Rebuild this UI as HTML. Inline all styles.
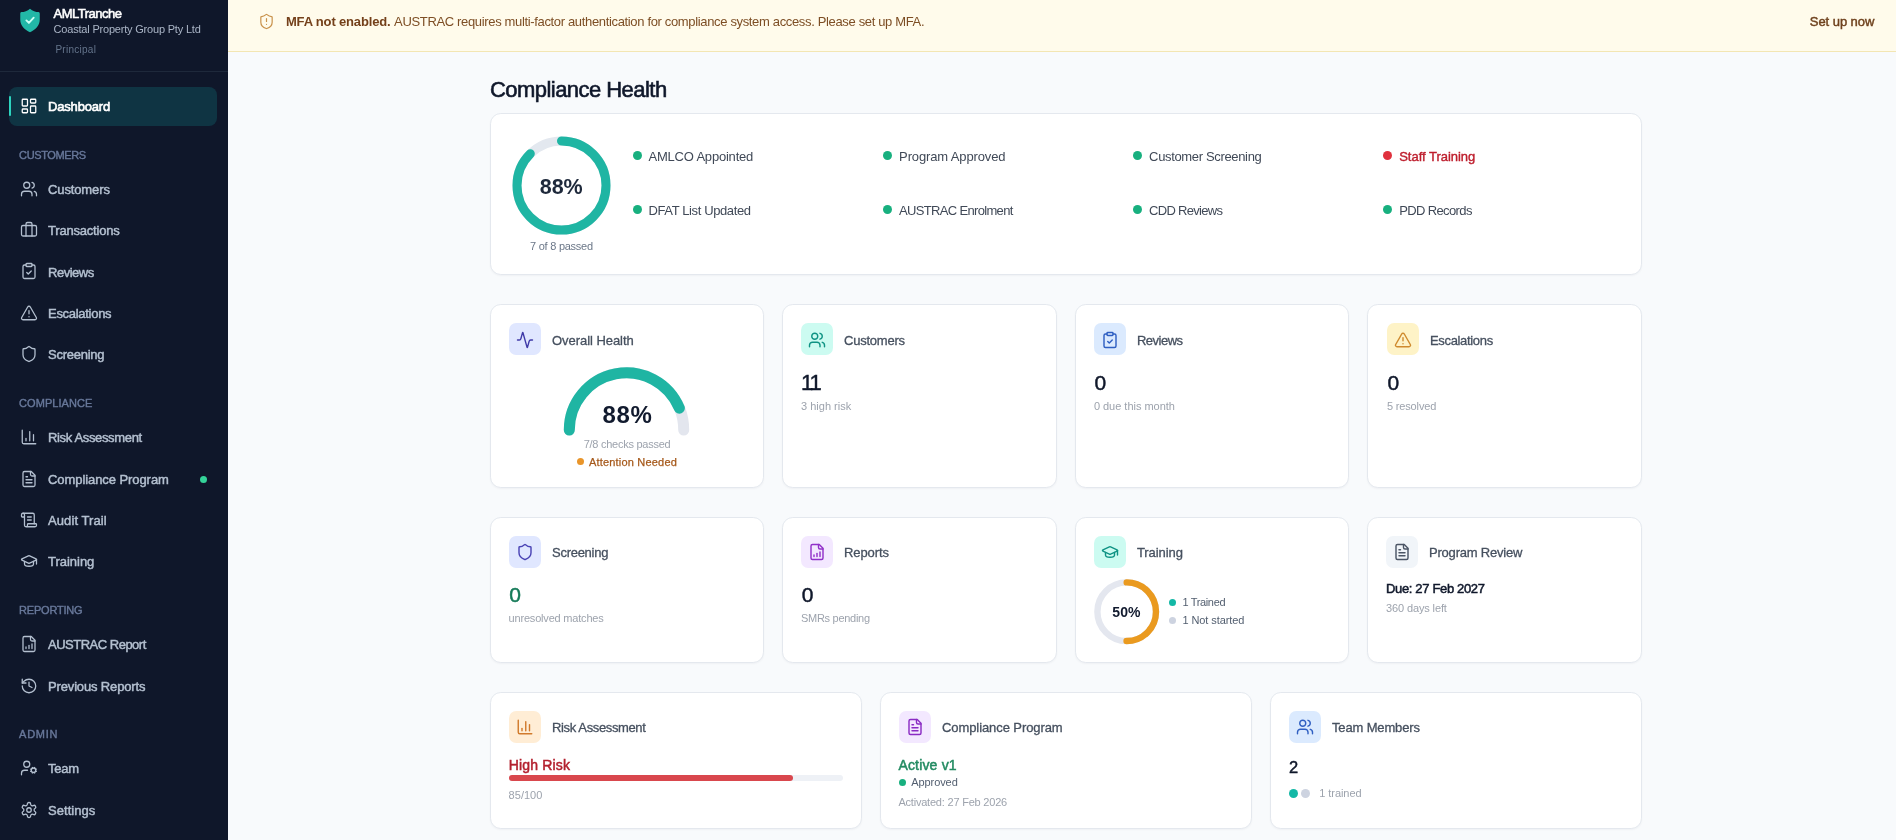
<!DOCTYPE html>
<html lang="en">
<head>
<meta charset="utf-8">
<title>AMLTranche – Dashboard</title>
<style>
*{box-sizing:border-box;margin:0;padding:0}
html,body{width:1896px;height:840px;overflow:hidden}
body{font-family:"Liberation Sans",sans-serif;background:#f8fafc;color:#0f172a;position:relative}
svg{display:block}
#root{position:absolute;left:0;top:0;width:1896px;height:840px;will-change:transform}
.t{position:absolute;white-space:nowrap}
.t i{font-style:normal}
#side{position:absolute;left:0;top:0;width:228px;height:840px;background:#0f172a}
#brand{position:absolute;left:0;top:0;width:228px;height:72px;border-bottom:1px solid #1e293b}
.nav{position:absolute;left:9px;width:208px;height:39.5px;border-radius:8px}
.nav svg,.ni{position:absolute;width:18px;height:18px;stroke:#b4c0d0;fill:none;stroke-width:1.7;stroke-linecap:round;stroke-linejoin:round}
.nav.act{background:#0f3443}
.nav.act:before{content:"";position:absolute;left:0;top:9px;width:2px;height:20px;background:#2dd4bf;border-radius:2px}
#ban{position:absolute;left:228px;top:0;width:1668px;height:52px;background:#fffbeb;border-bottom:1px solid #f3e6b3}
.card{position:absolute;background:#fff;border:1px solid #e4e8ee;border-radius:10.800px;box-shadow:0 1px 2px rgba(15,23,42,.04)}
.ibox{position:absolute;width:32px;height:32px;border-radius:7.200px}
.ibox svg{position:absolute;left:7px;top:7px;width:18px;height:18px;fill:none;stroke-width:1.9;stroke-linecap:round;stroke-linejoin:round}
.dot{position:absolute;border-radius:50%}
.abs{position:absolute}
</style>
</head>
<body>
<div id="root">

<div id="side">
<div id="brand"><svg class="abs" style="left:17.500px;top:7px" width="24" height="27" viewBox="0 0 24 27"><path d="M12 1.700C9.500 3.900 6.200 5 3.400 5.100Q2.250 5.200 2.250 6.400V12.500C2.250 18.500 6.500 22.800 12 25.300C17.500 22.800 21.750 18.500 21.750 12.500V6.400Q21.750 5.200 20.600 5.100C17.800 5 14.500 3.900 12 1.700Z" fill="#22b8a7"/><path d="M8.400 13.400l2.500 2.500 4.800-5.200" fill="none" stroke="#c9fff5" stroke-width="1.900" stroke-linecap="round" stroke-linejoin="round"/></svg></div>
<div class="t" style="font-size:13px;line-height:20px;top:4.10px;color:#ffffff;-webkit-text-stroke:0.55px #ffffff;left:53.60px;letter-spacing:-0.518px">AMLTranche</div>
<div class="t" style="font-size:11px;line-height:16px;top:21.49px;color:#aab5c6;left:53.60px;letter-spacing:-0.195px">Coastal Property Group Pty Ltd</div>
<div class="t" style="font-size:10px;line-height:15px;top:41.53px;color:#64748b;left:55.40px;letter-spacing:0.271px">Principal</div>
<div class="nav act" style="top:87px;height:38.5px;"><svg class="" style="left:11px;top:10px;stroke:#fff" viewBox="0 0 24 24"><rect x="3" y="3" width="7" height="9" rx="1"/><rect x="14" y="3" width="7" height="5" rx="1"/><rect x="14" y="12" width="7" height="9" rx="1"/><rect x="3" y="16" width="7" height="5" rx="1"/></svg></div>
<div class="t" style="font-size:13px;line-height:20px;top:97.45px;color:#ffffff;-webkit-text-stroke:0.6px #ffffff;left:48.00px;letter-spacing:-0.179px">Dashboard</div>
<div class="nav" style="top:169.8px;"><svg class="" style="left:11px;top:10px;" viewBox="0 0 24 24"><path d="M16 21v-2a4 4 0 0 0-4-4H6a4 4 0 0 0-4 4v2"/><circle cx="9" cy="7" r="4"/><path d="M22 21v-2a4 4 0 0 0-3-3.870"/><path d="M16 3.130a4 4 0 0 1 0 7.750"/></svg></div>
<div class="t" style="font-size:13px;line-height:20px;top:180.25px;color:#b4c0d0;-webkit-text-stroke:0.45px #b4c0d0;left:48.00px;letter-spacing:-0.118px">Customers</div>
<div class="nav" style="top:211.1px;"><svg class="" style="left:11px;top:10px;" viewBox="0 0 24 24"><rect x="2" y="6" width="20" height="14" rx="2"/><path d="M8 20V4a2 2 0 0 1 2-2h4a2 2 0 0 1 2 2v16"/></svg></div>
<div class="t" style="font-size:13px;line-height:20px;top:220.75px;color:#b4c0d0;-webkit-text-stroke:0.45px #b4c0d0;left:48.00px;letter-spacing:-0.195px">Transactions</div>
<div class="nav" style="top:252.4px;"><svg class="" style="left:11px;top:10px;" viewBox="0 0 24 24"><rect x="8" y="2" width="8" height="4" rx="1"/><path d="M16 4h2a2 2 0 0 1 2 2v14a2 2 0 0 1-2 2H6a2 2 0 0 1-2-2V6a2 2 0 0 1 2-2h2"/><path d="m9 14 2 2 4-4"/></svg></div>
<div class="t" style="font-size:13px;line-height:20px;top:262.85px;color:#b4c0d0;-webkit-text-stroke:0.45px #b4c0d0;left:48.00px;letter-spacing:-0.475px">Reviews</div>
<div class="nav" style="top:293.6px;"><svg class="" style="left:11px;top:10px;" viewBox="0 0 24 24"><path d="m21.730 18-8-14a2 2 0 0 0-3.480 0l-8 14A2 2 0 0 0 4 21h16a2 2 0 0 0 1.730-3"/><path d="M12 9v4"/><path d="M12 17h.01"/></svg></div>
<div class="t" style="font-size:13px;line-height:20px;top:304.05px;color:#b4c0d0;-webkit-text-stroke:0.45px #b4c0d0;left:48.00px;letter-spacing:-0.289px">Escalations</div>
<div class="nav" style="top:334.8px;"><svg class="" style="left:11px;top:10px;" viewBox="0 0 24 24"><path d="M20 13c0 5-3.500 7.500-7.660 8.950a1 1 0 0 1-.67-.01C7.500 20.500 4 18 4 13V6a1 1 0 0 1 1-1c2 0 4.500-1.200 6.240-2.720a1.170 1.170 0 0 1 1.520 0C14.510 3.810 17 5 19 5a1 1 0 0 1 1 1z"/></svg></div>
<div class="t" style="font-size:13px;line-height:20px;top:345.25px;color:#b4c0d0;-webkit-text-stroke:0.45px #b4c0d0;left:48.00px;letter-spacing:-0.250px">Screening</div>
<div class="nav" style="top:417.5px;"><svg class="" style="left:11px;top:10px;" viewBox="0 0 24 24"><path d="M3 3v16a2 2 0 0 0 2 2h16"/><path d="M18 17V9"/><path d="M13 17V5"/><path d="M8 17v-3"/></svg></div>
<div class="t" style="font-size:13px;line-height:20px;top:427.95px;color:#b4c0d0;-webkit-text-stroke:0.45px #b4c0d0;left:48.00px;letter-spacing:-0.346px">Risk Assessment</div>
<div class="nav" style="top:459px;"><svg class="" style="left:11px;top:11px;" viewBox="0 0 24 24"><path d="M15 2H6a2 2 0 0 0-2 2v16a2 2 0 0 0 2 2h12a2 2 0 0 0 2-2V7Z"/><path d="M14 2v4a2 2 0 0 0 2 2h4"/><path d="M10 9H8"/><path d="M16 13H8"/><path d="M16 17H8"/></svg></div>
<div class="t" style="font-size:13px;line-height:20px;top:470.45px;color:#b4c0d0;-webkit-text-stroke:0.45px #b4c0d0;left:48.00px;letter-spacing:-0.073px">Compliance Program</div>
<div class="nav" style="top:500.5px;"><svg class="" style="left:11px;top:10px;" viewBox="0 0 24 24"><path d="M15 12h-5"/><path d="M15 8h-5"/><path d="M19 17V5a2 2 0 0 0-2-2H4"/><path d="M8 21h12a2 2 0 0 0 2-2v-1a1 1 0 0 0-1-1H11a1 1 0 0 0-1 1v1a2 2 0 1 1-4 0V5a2 2 0 1 0-4 0v2a1 1 0 0 0 1 1h3"/></svg></div>
<div class="t" style="font-size:13px;line-height:20px;top:510.95px;color:#b4c0d0;-webkit-text-stroke:0.45px #b4c0d0;left:48.00px;letter-spacing:0.090px">Audit Trail</div>
<div class="nav" style="top:542px;"><svg class="" style="left:11px;top:10px;" viewBox="0 0 24 24"><path d="M21.420 10.922a1 1 0 0 0-.019-1.838L12.830 5.180a2 2 0 0 0-1.660 0L2.600 9.080a1 1 0 0 0 0 1.832l8.570 3.908a2 2 0 0 0 1.660 0z"/><path d="M22 10v6"/><path d="M6 12.500V16a6 3 0 0 0 12 0v-3.500"/></svg></div>
<div class="t" style="font-size:13px;line-height:20px;top:552.45px;color:#b4c0d0;-webkit-text-stroke:0.45px #b4c0d0;left:48.00px;letter-spacing:-0.023px">Training</div>
<div class="nav" style="top:624.5px;"><svg class="" style="left:11px;top:10px;" viewBox="0 0 24 24"><path d="M15 2H6a2 2 0 0 0-2 2v16a2 2 0 0 0 2 2h12a2 2 0 0 0 2-2V7Z"/><path d="M14 2v4a2 2 0 0 0 2 2h4"/><path d="M8 18v-2"/><path d="M12 18v-4"/><path d="M16 18v-6"/></svg></div>
<div class="t" style="font-size:13px;line-height:20px;top:634.95px;color:#b4c0d0;-webkit-text-stroke:0.45px #b4c0d0;left:48.00px;letter-spacing:-0.496px">AUSTRAC Report</div>
<div class="nav" style="top:666px;"><svg class="" style="left:11px;top:11px;" viewBox="0 0 24 24"><path d="M3 12a9 9 0 1 0 9-9 9.750 9.750 0 0 0-6.740 2.740L3 8"/><path d="M3 3v5h5"/><path d="M12 7v5l4 2"/></svg></div>
<div class="t" style="font-size:13px;line-height:20px;top:677.45px;color:#b4c0d0;-webkit-text-stroke:0.45px #b4c0d0;left:48.00px;letter-spacing:-0.151px">Previous Reports</div>
<div class="nav" style="top:748.5px;"><svg class="" style="left:11px;top:10px;" viewBox="0 0 24 24"><path d="M10 15H6a4 4 0 0 0-4 4v2"/><path d="m14.305 16.530.923-.382"/><path d="m15.228 13.852-.923-.383"/><path d="m16.852 12.228-.383-.923"/><path d="m16.852 17.772-.383.924"/><path d="m19.148 12.228.383-.923"/><path d="m19.530 18.696-.382-.924"/><path d="m20.772 13.852.924-.383"/><path d="m20.772 16.148.924.383"/><circle cx="18" cy="15" r="3"/><circle cx="9" cy="7" r="4"/></svg></div>
<div class="t" style="font-size:13px;line-height:20px;top:758.95px;color:#b4c0d0;-webkit-text-stroke:0.45px #b4c0d0;left:48.00px;letter-spacing:-0.249px">Team</div>
<div class="nav" style="top:790px;"><svg class="" style="left:11px;top:11px;" viewBox="0 0 24 24"><path d="M12.220 2h-.440a2 2 0 0 0-2 2v.180a2 2 0 0 1-1 1.730l-.430.250a2 2 0 0 1-2 0l-.150-.080a2 2 0 0 0-2.730.730l-.220.380a2 2 0 0 0 .730 2.730l.150.100a2 2 0 0 1 1 1.720v.510a2 2 0 0 1-1 1.740l-.150.090a2 2 0 0 0-.730 2.730l.220.380a2 2 0 0 0 2.730.730l.150-.080a2 2 0 0 1 2 0l.430.250a2 2 0 0 1 1 1.730V20a2 2 0 0 0 2 2h.440a2 2 0 0 0 2-2v-.180a2 2 0 0 1 1-1.730l.430-.250a2 2 0 0 1 2 0l.150.080a2 2 0 0 0 2.730-.730l.220-.390a2 2 0 0 0-.730-2.730l-.150-.080a2 2 0 0 1-1-1.740v-.500a2 2 0 0 1 1-1.740l.150-.090a2 2 0 0 0 .730-2.730l-.220-.380a2 2 0 0 0-2.730-.730l-.150.080a2 2 0 0 1-2 0l-.430-.250a2 2 0 0 1-1-1.730V4a2 2 0 0 0-2-2z"/><circle cx="12" cy="12" r="3"/></svg></div>
<div class="t" style="font-size:13px;line-height:20px;top:801.45px;color:#b4c0d0;-webkit-text-stroke:0.45px #b4c0d0;left:48.00px;letter-spacing:0.039px">Settings</div>
<div class="t" style="font-size:11px;line-height:16px;top:147.19px;color:#68789a;-webkit-text-stroke:0.4px #68789a;left:19.10px;letter-spacing:-0.377px">CUSTOMERS</div>
<div class="t" style="font-size:11px;line-height:16px;top:395.19px;color:#68789a;-webkit-text-stroke:0.4px #68789a;left:19.10px;letter-spacing:0.045px">COMPLIANCE</div>
<div class="t" style="font-size:11px;line-height:16px;top:602.19px;color:#68789a;-webkit-text-stroke:0.4px #68789a;left:19.10px;letter-spacing:-0.211px">REPORTING</div>
<div class="t" style="font-size:11px;line-height:16px;top:726.19px;color:#68789a;-webkit-text-stroke:0.4px #68789a;left:19.10px;letter-spacing:0.709px">ADMIN</div>
<div class="dot" style="left:200px;top:475.5px;width:7px;height:7px;background:#34d399"></div>
</div>
<div id="ban"><svg class="abs" style="left:29.500px;top:12.500px;width:17px;height:17px;stroke:#c9924b;fill:none;stroke-width:1.700;stroke-linecap:round;stroke-linejoin:round" viewBox="0 0 24 24"><path d="M20 13c0 5-3.500 7.500-7.660 8.950a1 1 0 0 1-.67-.01C7.500 20.500 4 18 4 13V6a1 1 0 0 1 1-1c2 0 4.500-1.200 6.240-2.720a1.170 1.170 0 0 1 1.520 0C14.510 3.810 17 5 19 5a1 1 0 0 1 1 1z"/><path d="M12 8v4"/><path d="M12 16h.01"/></svg></div>
<div class="t" style="font-size:13px;line-height:20px;top:12.10px;color:#74401a;font-weight:700;left:285.90px;letter-spacing:-0.159px">MFA not enabled.</div>
<div class="t" style="font-size:13px;line-height:20px;top:12.10px;color:#7d4e24;left:394.10px;letter-spacing:-0.344px">AUSTRAC requires multi-factor authentication for compliance system access. Please set up MFA.</div>
<div class="t" style="font-size:13px;line-height:20px;top:12.10px;color:#6f421e;-webkit-text-stroke:0.45px #6f421e;left:1809.80px;letter-spacing:-0.055px">Set up now</div>
<div class="t" style="font-size:22px;line-height:33px;top:73.28px;color:#0f172a;-webkit-text-stroke:0.6px #0f172a;left:490.00px;letter-spacing:-0.546px">Compliance Health</div>
<div class="card" style="left:490px;top:113px;width:1152px;height:162.400px"></div>
<svg class="abs" style="left:507.5px;top:131.6px" width="107.0" height="107.0" viewBox="-53.5 -53.5 107.0 107.0"><circle r="44.5" fill="none" stroke="#e3e8ef" stroke-width="9"/><circle r="44.5" fill="none" stroke="#1fb5a3" stroke-width="9" stroke-linecap="round" stroke-dasharray="244.65 279.60" transform="rotate(-90)"/></svg>
<div class="t" style="font-size:21.5px;line-height:32px;top:170.85px;color:#1e293b;font-weight:700;left:539.69px;letter-spacing:-0.016px">88%</div>
<div class="t" style="font-size:11px;line-height:16px;top:238.19px;color:#6b7788;left:530.07px;letter-spacing:-0.251px">7 of 8 passed</div>
<div class="dot" style="left:632.5px;top:151.3px;width:9px;height:9px;background:#18b07f"></div>
<div class="t" style="font-size:13px;line-height:20px;top:146.60px;color:#404957;left:648.50px;letter-spacing:-0.206px">AMLCO Appointed</div>
<div class="dot" style="left:883.1px;top:151.3px;width:9px;height:9px;background:#18b07f"></div>
<div class="t" style="font-size:13px;line-height:20px;top:146.60px;color:#404957;left:899.10px;letter-spacing:-0.132px">Program Approved</div>
<div class="dot" style="left:1133.1px;top:151.3px;width:9px;height:9px;background:#18b07f"></div>
<div class="t" style="font-size:13px;line-height:20px;top:146.60px;color:#404957;left:1149.10px;letter-spacing:-0.344px">Customer Screening</div>
<div class="dot" style="left:632.5px;top:205.2px;width:9px;height:9px;background:#18b07f"></div>
<div class="t" style="font-size:13px;line-height:20px;top:200.50px;color:#404957;left:648.50px;letter-spacing:-0.385px">DFAT List Updated</div>
<div class="dot" style="left:883.1px;top:205.2px;width:9px;height:9px;background:#18b07f"></div>
<div class="t" style="font-size:13px;line-height:20px;top:200.50px;color:#404957;left:899.10px;letter-spacing:-0.670px">AUSTRAC Enrolment</div>
<div class="dot" style="left:1133.1px;top:205.2px;width:9px;height:9px;background:#18b07f"></div>
<div class="t" style="font-size:13px;line-height:20px;top:200.50px;color:#404957;left:1149.10px;letter-spacing:-0.710px">CDD Reviews</div>
<div class="dot" style="left:1383.2px;top:205.2px;width:9px;height:9px;background:#18b07f"></div>
<div class="t" style="font-size:13px;line-height:20px;top:200.50px;color:#404957;left:1399.20px;letter-spacing:-0.624px">PDD Records</div>
<div class="dot" style="left:1383.2px;top:151.3px;width:9px;height:9px;background:#e0313d"></div>
<div class="t" style="font-size:13px;line-height:20px;top:146.60px;color:#be1e2d;-webkit-text-stroke:0.4px #be1e2d;left:1399.20px;letter-spacing:-0.020px">Staff Training</div>
<div class="card" style="left:490px;top:304px;width:274px;height:184px"></div>
<div class="ibox" style="left:509px;top:323px;background:#e0e7ff"><svg class="" style="stroke:#3f3aa8;top:8px" viewBox="0 0 24 24"><path d="M22 12h-2.480a2 2 0 0 0-1.930 1.460l-2.350 8.360a.250.250 0 0 1-.480 0L9.240 2.180a.250.250 0 0 0-.480 0l-2.350 8.360A2 2 0 0 1 4.490 12H2"/></svg></div>
<div class="t" style="font-size:13px;line-height:20px;top:330.80px;color:#46505f;-webkit-text-stroke:0.3px #46505f;left:552.00px;letter-spacing:-0.048px">Overall Health</div>
<div class="card" style="left:782px;top:304px;width:274.6px;height:184px"></div>
<div class="ibox" style="left:801px;top:323px;background:#ccfbf1"><svg class="" style="stroke:#0f9384;top:8px" viewBox="0 0 24 24"><path d="M16 21v-2a4 4 0 0 0-4-4H6a4 4 0 0 0-4 4v2"/><circle cx="9" cy="7" r="4"/><path d="M22 21v-2a4 4 0 0 0-3-3.870"/><path d="M16 3.130a4 4 0 0 1 0 7.750"/></svg></div>
<div class="t" style="font-size:13px;line-height:20px;top:330.80px;color:#46505f;-webkit-text-stroke:0.3px #46505f;left:844.00px;letter-spacing:-0.229px">Customers</div>
<div class="card" style="left:1075px;top:304px;width:274px;height:184px"></div>
<div class="ibox" style="left:1094px;top:323px;background:#dbeafe"><svg class="" style="stroke:#2f5fc2;top:8px" viewBox="0 0 24 24"><rect x="8" y="2" width="8" height="4" rx="1"/><path d="M16 4h2a2 2 0 0 1 2 2v14a2 2 0 0 1-2 2H6a2 2 0 0 1-2-2V6a2 2 0 0 1 2-2h2"/><path d="m9 14 2 2 4-4"/></svg></div>
<div class="t" style="font-size:13px;line-height:20px;top:330.80px;color:#46505f;-webkit-text-stroke:0.3px #46505f;left:1137.00px;letter-spacing:-0.518px">Reviews</div>
<div class="card" style="left:1367px;top:304px;width:274.8px;height:184px"></div>
<div class="ibox" style="left:1387px;top:323px;background:#fef3c7"><svg class="" style="stroke:#cf8a2e;top:8px" viewBox="0 0 24 24"><path d="m21.730 18-8-14a2 2 0 0 0-3.480 0l-8 14A2 2 0 0 0 4 21h16a2 2 0 0 0 1.730-3"/><path d="M12 9v4"/><path d="M12 17h.01"/></svg></div>
<div class="t" style="font-size:13px;line-height:20px;top:330.80px;color:#46505f;-webkit-text-stroke:0.3px #46505f;left:1430.00px;letter-spacing:-0.335px">Escalations</div>
<svg class="abs" style="left:0;top:0" width="1896" height="840" viewBox="0 0 1896 840"><path d="M569.30 430.00A57.2 57.2 0 0 1 683.70 430.00" fill="none" stroke="#e3e6ee" stroke-width="11" stroke-linecap="round"/><path d="M569.30 430.00A57.2 57.2 0 0 1 679.35 408.11" fill="none" stroke="#1fb5a3" stroke-width="11" stroke-linecap="round"/></svg>
<div class="t" style="font-size:24px;line-height:36px;top:396.58px;color:#111a2e;font-weight:700;left:602.43px;letter-spacing:0.751px">88%</div>
<div class="t" style="font-size:11px;line-height:16px;top:436.19px;color:#9da3ad;left:583.67px;letter-spacing:-0.254px">7/8 checks passed</div>
<div class="dot" style="left:577.200px;top:458.400px;width:7px;height:7px;background:#e9952a"></div>
<div class="t" style="font-size:11px;line-height:16px;top:453.99px;color:#a5581a;-webkit-text-stroke:0.25px #a5581a;left:589.00px;letter-spacing:0.187px">Attention Needed</div>
<div class="t" style="font-size:22px;line-height:33px;top:365.98px;color:#0f172a;-webkit-text-stroke:0.45px #0f172a;left:801.00px;letter-spacing:-2.200px">11</div>
<div class="t" style="font-size:11px;line-height:16px;top:397.69px;color:#9da3ad;left:801.00px;letter-spacing:0.014px">3 high risk</div>
<div class="t" style="font-size:21px;line-height:32px;top:367.12px;color:#0f172a;-webkit-text-stroke:0.45px #0f172a;left:1094.60px;letter-spacing:0.113px">0</div>
<div class="t" style="font-size:11px;line-height:16px;top:397.69px;color:#9da3ad;left:1093.90px;letter-spacing:-0.021px">0 due this month</div>
<div class="t" style="font-size:21px;line-height:32px;top:367.12px;color:#0f172a;-webkit-text-stroke:0.45px #0f172a;left:1387.60px;letter-spacing:0.113px">0</div>
<div class="t" style="font-size:11px;line-height:16px;top:397.69px;color:#9da3ad;left:1386.90px;letter-spacing:-0.147px">5 resolved</div>
<div class="card" style="left:490px;top:517px;width:274px;height:146px"></div>
<div class="ibox" style="left:509px;top:536px;background:#e0e7ff"><svg class="" style="stroke:#4a44b5" viewBox="0 0 24 24"><path d="M20 13c0 5-3.500 7.500-7.660 8.950a1 1 0 0 1-.67-.01C7.500 20.500 4 18 4 13V6a1 1 0 0 1 1-1c2 0 4.500-1.200 6.240-2.720a1.170 1.170 0 0 1 1.520 0C14.510 3.810 17 5 19 5a1 1 0 0 1 1 1z"/></svg></div>
<div class="t" style="font-size:13px;line-height:20px;top:543.40px;color:#46505f;-webkit-text-stroke:0.3px #46505f;left:552.00px;letter-spacing:-0.272px">Screening</div>
<div class="card" style="left:782px;top:517px;width:274.6px;height:146px"></div>
<div class="ibox" style="left:801px;top:536px;background:#f3e8ff"><svg class="" style="stroke:#9130c9" viewBox="0 0 24 24"><path d="M15 2H6a2 2 0 0 0-2 2v16a2 2 0 0 0 2 2h12a2 2 0 0 0 2-2V7Z"/><path d="M14 2v4a2 2 0 0 0 2 2h4"/><path d="M8 18v-2"/><path d="M12 18v-4"/><path d="M16 18v-6"/></svg></div>
<div class="t" style="font-size:13px;line-height:20px;top:543.40px;color:#46505f;-webkit-text-stroke:0.3px #46505f;left:844.00px;letter-spacing:-0.104px">Reports</div>
<div class="card" style="left:1075px;top:517px;width:274px;height:146px"></div>
<div class="ibox" style="left:1094px;top:536px;background:#ccfbf1"><svg class="" style="stroke:#0f9384" viewBox="0 0 24 24"><path d="M21.420 10.922a1 1 0 0 0-.019-1.838L12.830 5.180a2 2 0 0 0-1.660 0L2.600 9.080a1 1 0 0 0 0 1.832l8.570 3.908a2 2 0 0 0 1.660 0z"/><path d="M22 10v6"/><path d="M6 12.500V16a6 3 0 0 0 12 0v-3.500"/></svg></div>
<div class="t" style="font-size:13px;line-height:20px;top:543.40px;color:#46505f;-webkit-text-stroke:0.3px #46505f;left:1137.00px;letter-spacing:-0.086px">Training</div>
<div class="card" style="left:1367px;top:517px;width:274.8px;height:146px"></div>
<div class="ibox" style="left:1386px;top:536px;background:#f1f5f9"><svg class="" style="stroke:#4b5565" viewBox="0 0 24 24"><path d="M15 2H6a2 2 0 0 0-2 2v16a2 2 0 0 0 2 2h12a2 2 0 0 0 2-2V7Z"/><path d="M14 2v4a2 2 0 0 0 2 2h4"/><path d="M10 9H8"/><path d="M16 13H8"/><path d="M16 17H8"/></svg></div>
<div class="t" style="font-size:13px;line-height:20px;top:543.40px;color:#46505f;-webkit-text-stroke:0.3px #46505f;left:1429.00px;letter-spacing:-0.207px">Program Review</div>
<div class="t" style="font-size:21px;line-height:32px;top:578.92px;color:#157a58;-webkit-text-stroke:0.45px #157a58;left:509.30px;letter-spacing:0.113px">0</div>
<div class="t" style="font-size:11px;line-height:16px;top:610.49px;color:#9da3ad;left:508.60px;letter-spacing:-0.192px">unresolved matches</div>
<div class="t" style="font-size:21px;line-height:32px;top:578.92px;color:#0f172a;-webkit-text-stroke:0.45px #0f172a;left:801.70px;letter-spacing:0.113px">0</div>
<div class="t" style="font-size:11px;line-height:16px;top:610.49px;color:#9da3ad;left:801.00px;letter-spacing:-0.280px">SMRs pending</div>
<svg class="abs" style="left:1090.6px;top:575.8000000000001px" width="71.4" height="71.4" viewBox="-35.7 -35.7 71.4 71.4"><circle r="29.3" fill="none" stroke="#e4e7ef" stroke-width="6.4"/><circle r="29.3" fill="none" stroke="#ea9a1f" stroke-width="6.4" stroke-linecap="round" stroke-dasharray="92.05 184.10" transform="rotate(-90)"/></svg>
<div class="t" style="font-size:14px;line-height:21px;top:601.55px;color:#111a2e;font-weight:700;left:1112.29px;letter-spacing:0.090px">50%</div>
<div class="dot" style="left:1169px;top:599px;width:7px;height:7px;background:#14b8a6"></div>
<div class="dot" style="left:1169px;top:617px;width:7px;height:7px;background:#cdd3e0"></div>
<div class="t" style="font-size:11px;line-height:16px;top:594.49px;color:#525e6f;left:1182.40px;letter-spacing:-0.342px">1 Trained</div>
<div class="t" style="font-size:11px;line-height:16px;top:612.39px;color:#525e6f;left:1182.40px;letter-spacing:-0.076px">1 Not started</div>
<div class="t" style="font-size:13px;line-height:20px;top:578.90px;color:#0f172a;-webkit-text-stroke:0.5px #0f172a;left:1386.00px;letter-spacing:-0.342px">Due: 27 Feb 2027</div>
<div class="t" style="font-size:11px;line-height:16px;top:600.19px;color:#9da3ad;left:1386.00px;letter-spacing:-0.121px">360 days left</div>
<div class="card" style="left:490px;top:692px;width:372px;height:137px"></div>
<div class="ibox" style="left:509px;top:711px;background:#ffedd5"><svg class="" style="stroke:#d17a2c" viewBox="0 0 24 24"><path d="M3 3v16a2 2 0 0 0 2 2h16"/><path d="M18 17V9"/><path d="M13 17V5"/><path d="M8 17v-3"/></svg></div>
<div class="t" style="font-size:13px;line-height:20px;top:718.40px;color:#46505f;-webkit-text-stroke:0.3px #46505f;left:552.00px;letter-spacing:-0.366px">Risk Assessment</div>
<div class="card" style="left:880px;top:692px;width:372px;height:137px"></div>
<div class="ibox" style="left:899px;top:711px;background:#f3e8ff"><svg class="" style="stroke:#8a2bc4" viewBox="0 0 24 24"><path d="M15 2H6a2 2 0 0 0-2 2v16a2 2 0 0 0 2 2h12a2 2 0 0 0 2-2V7Z"/><path d="M14 2v4a2 2 0 0 0 2 2h4"/><path d="M10 9H8"/><path d="M16 13H8"/><path d="M16 17H8"/></svg></div>
<div class="t" style="font-size:13px;line-height:20px;top:718.40px;color:#46505f;-webkit-text-stroke:0.3px #46505f;left:942.00px;letter-spacing:-0.084px">Compliance Program</div>
<div class="card" style="left:1270px;top:692px;width:372px;height:137px"></div>
<div class="ibox" style="left:1289px;top:711px;background:#dbeafe"><svg class="" style="stroke:#2f5fc2" viewBox="0 0 24 24"><path d="M16 21v-2a4 4 0 0 0-4-4H6a4 4 0 0 0-4 4v2"/><circle cx="9" cy="7" r="4"/><path d="M22 21v-2a4 4 0 0 0-3-3.870"/><path d="M16 3.130a4 4 0 0 1 0 7.750"/></svg></div>
<div class="t" style="font-size:13px;line-height:20px;top:718.40px;color:#46505f;-webkit-text-stroke:0.3px #46505f;left:1332.00px;letter-spacing:-0.148px">Team Members</div>
<div class="t" style="font-size:14px;line-height:21px;top:755.25px;color:#b3202e;-webkit-text-stroke:0.5px #b3202e;left:508.70px;letter-spacing:0.177px">High Risk</div>
<div class="abs" style="left:509px;top:775px;width:333.500px;height:6px;border-radius:3px;background:#eef1f6"></div>
<div class="abs" style="left:509px;top:775px;width:283.500px;height:6px;border-radius:3px;background:#d9474d"></div>
<div class="t" style="font-size:11px;line-height:16px;top:786.99px;color:#9da3ad;left:508.60px;letter-spacing:0.024px">85/100</div>
<div class="t" style="font-size:14px;line-height:21px;top:755.25px;color:#238b62;-webkit-text-stroke:0.5px #238b62;left:898.40px;letter-spacing:0.176px">Active v1</div>
<div class="dot" style="left:899px;top:779px;width:7px;height:7px;background:#18b07f"></div>
<div class="t" style="font-size:11px;line-height:16px;top:774.19px;color:#525e6f;left:911.20px;letter-spacing:-0.074px">Approved</div>
<div class="t" style="font-size:11px;line-height:16px;top:793.99px;color:#9da3ad;left:898.40px;letter-spacing:-0.206px">Activated: 27 Feb 2026</div>
<div class="t" style="font-size:16.5px;line-height:25px;top:754.78px;color:#0f172a;-webkit-text-stroke:0.45px #0f172a;left:1288.90px;letter-spacing:0.613px">2</div>
<div class="dot" style="left:1288.500px;top:788.700px;width:9.600px;height:9.600px;background:#14b8a6"></div>
<div class="dot" style="left:1300.600px;top:788.700px;width:9.600px;height:9.600px;background:#cdd3e0"></div>
<div class="t" style="font-size:11px;line-height:16px;top:785.49px;color:#9da3ad;left:1319.20px;letter-spacing:-0.046px">1 trained</div>
</div>
</body>
</html>
